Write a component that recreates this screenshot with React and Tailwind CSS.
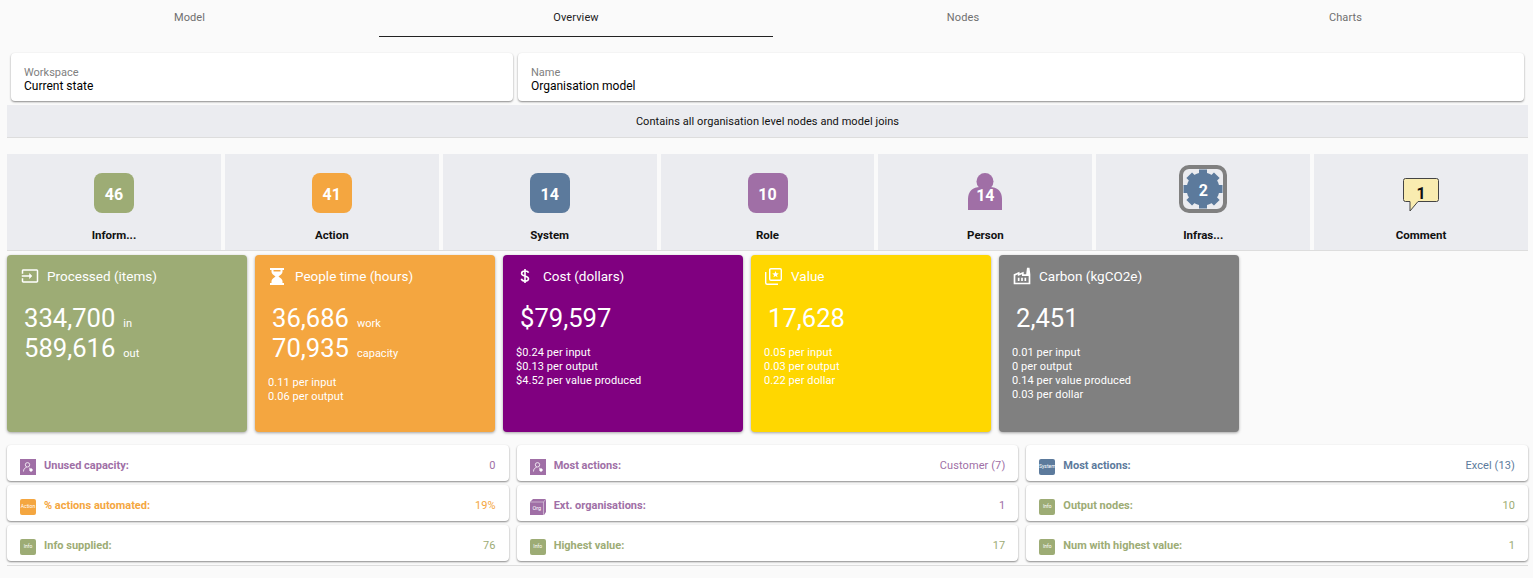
import React from 'react';
import { MdOutlineInput, MdOutlineFactory } from 'react-icons/md';

const tabs = ['Model', 'Overview', 'Nodes', 'Charts'];

const PersonCog = () => (
  <svg viewBox="0 0 16 16" className="w-full h-full" fill="none" stroke="white" strokeWidth="0.8">
    <circle cx="7.500" cy="5.800" r="2.200" />
    <path d="M3.500 12.500c0-2.500 1.500-3.800 3-4M9 9l1.200.6" />
    <circle cx="11" cy="11" r="1.300" fill="white" />
  </svg>
);

const OrgBox = () => (
  <svg viewBox="0 0 16 16" className="w-full h-full">
    <path d="M0 3 3 0h13v13l-2 3H0z" fill="#a06fa6" />
    <path d="M0 3h13.500V16M13.500 3 16 0" fill="none" stroke="#e8dcea" strokeWidth="0.6" />
    <text x="6.800" y="11" textAnchor="middle" fontSize="5.500" fill="white" fontFamily="Roboto">Org</text>
  </svg>
);

const Hourglass = () => (
  <svg viewBox="0 0 14 17" className="w-[14px] h-[17px]" fill="white" fillRule="evenodd">
    <path d="M0 0h14v2h-1.500v2c0 2-2.500 3-4 4.500 1.500 1.500 4 2.500 4 4.500v2H14v2H0v-2h1.500v-2c0-2 2.500-3 4-4.500C4 7 1.500 6 1.500 4V2H0zM3.500 2v1.500h7V2z" />
  </svg>
);

const Dollar = () => (
  <svg viewBox="0 0 10 14" className="w-[10px] h-[14px]" fill="none" stroke="white" strokeWidth="1.600">
    <path d="M8.500 3.800C8 2.300 6.500 2 5 2 3 2 1.600 3 1.600 4.400 1.600 5.800 3 6.400 5 7c2 .6 3.500 1.200 3.500 2.700 0 1.500-1.500 2.300-3.500 2.300-1.800 0-3.200-.7-3.700-2.300M5 0v14" />
  </svg>
);

const ValueIcon = () => (
  <svg viewBox="0 0 17 17" className="w-[17px] h-[17px]" fill="none" stroke="white" strokeWidth="1.400">
    <rect x="4.700" y="0.700" width="11.600" height="11.600" rx="1.200" />
    <path d="M0.700 4v10.800a1.500 1.500 0 0 0 1.500 1.500H13" />
    <path d="M10.500 3 11.400 5.300 13.800 5.400 11.900 7 12.600 9.300 10.500 8 8.400 9.300 9.100 7 7.200 5.400 9.600 5.300z" fill="white" stroke="none" />
  </svg>
);

const Tile = ({ label, children }) => (
  <div className="flex-1 h-[96px] bg-[#ebecf0] flex flex-col items-center">
    <div className="h-[71px] flex items-center justify-center pt-[7px]">{children}</div>
    <div className="text-[11.5px] font-bold text-[#111] mt-[2px]">{label}</div>
  </div>
);

const Badge = ({ color, children }) => (
  <div className={`w-10 h-10 rounded-lg flex items-center justify-center pt-[4px] text-white font-bold text-base ${color}`}>{children}</div>
);

const Kpi = ({ color, icon, title, children }) => (
  <div className={`w-[240px] h-[177px] rounded shadow-[0_1px_3px_rgba(0,0,0,0.35)] text-white pl-[14px] ${color}`}>
    <div className="h-[42px] flex items-center">
      <span className="w-[26px] flex-none flex items-center">{icon}</span>
      <span className="text-[13.5px]">{title}</span>
    </div>
    {children}
  </div>
);

const Big = ({ value, unit }) => (
  <div className="h-[30px] flex items-baseline">
    <span className="text-[25.6px] leading-[30px]">{value}</span>
    {unit && <span className="text-[11px] ml-2">{unit}</span>}
  </div>
);

const Lines = ({ items }) => (
  <div className="mt-[13px] -ml-[1px] text-[11px] leading-[14px] tracking-[0.08px]">
    {items.map((t) => <div key={t}>{t}</div>)}
  </div>
);

const SmallIcon = ({ color, children, square }) => (
  <div className={`w-4 h-4 flex-none flex items-center justify-center overflow-hidden text-white text-[5px] ${square ? '' : 'rounded-[2px]'} ${color}`}>{children}</div>
);

const Stat = ({ icon, label, value, text }) => (
  <div className="h-9 bg-white rounded shadow-[0_1px_2px_rgba(0,0,0,0.45)] flex items-center pl-[13px] pr-[13px] pt-[7px]">
    {icon}
    <span className={`ml-2 text-[11px] font-bold ${text}`}>{label}</span>
    <span className={`ml-auto text-[11px] tracking-[0.1px] ${text}`}>{value}</span>
  </div>
);

const purple = 'bg-[#a06fa6]';
const textPurple = 'text-[#a06fa6]';
const textOrange = 'text-[#f4a640]';
const textGreen = 'text-[#9dac75]';
const textBlue = 'text-[#5c7a9c]';
const info = <SmallIcon color="bg-[#9dac75]">Info</SmallIcon>;

export default function App() {
  return (
    <div className="min-h-[578px] bg-[#fafafa] overflow-hidden font-['Roboto',sans-serif] text-[#111]">
      {/* tabs */}
      <div className="grid grid-cols-[379px_394px_380px_385px] h-[37px]">
        {tabs.map((t) => (
          <div
            key={t}
            className={`flex justify-center pt-[11px] text-[11px] leading-[14px] tracking-[0.1px] ${t === 'Overview' ? 'border-b border-[#222] text-[#222]' : 'text-[#6f6f6f]'}`}
          >
            {t}
          </div>
        ))}
      </div>

      <div className="grid grid-cols-[502px_1fr] gap-[5px] mt-[16px] ml-[11px] mr-[9px]">
        <div className="h-12 bg-white rounded shadow-[0_1px_2px_rgba(0,0,0,0.45)] px-[13px] pt-[13px] text-xs">
          <div className="text-[11px] leading-[13px] text-[#808080]">Workspace</div>
          <div className="leading-[14px] text-[#000]">Current state</div>
        </div>
        <div className="h-12 bg-white rounded shadow-[0_1px_2px_rgba(0,0,0,0.45)] px-[13px] pt-[13px] text-xs">
          <div className="text-[11px] leading-[13px] text-[#808080]">Name</div>
          <div className="leading-[14px] text-[#000]">Organisation model</div>
        </div>
      </div>

      <div className="mt-1 ml-[7px] mr-[5px] h-[33px] pt-[2px] bg-[#ebecf0] border-b border-[#ddd] flex items-center justify-center text-[11px] tracking-[0.07px]">
        Contains all organisation level nodes and model joins
      </div>

      {/* node type tiles */}
      <div className="mt-4 ml-[7px] mr-[5px] border-b border-[#ddd] flex gap-1">
        <Tile label="Inform..."><Badge color="bg-[#9dac75]">46</Badge></Tile>
        <Tile label="Action"><Badge color="bg-[#f4a640]">41</Badge></Tile>
        <Tile label="System"><Badge color="bg-[#5c7a9c]">14</Badge></Tile>
        <Tile label="Role"><Badge color={purple}>10</Badge></Tile>
        <Tile label="Person">
          <div className="relative w-[36px] h-10">
            <svg viewBox="0 0 36 40" className="w-full h-full">
              <circle cx="18" cy="8.500" r="8.500" fill="#a06fa6" />
              <path d="M1 37V26C1 18 6 14 13 14h10c7 0 12 4 12 12v11z" fill="#a06fa6" />
            </svg>
            <span className="absolute inset-x-0 top-[11px] text-center text-white font-bold text-base">14</span>
          </div>
        </Tile>
        <Tile label="Infras...">
          <div className="relative w-[48px] h-[48px] -mt-[8px]">
            <svg viewBox="0 0 48 48" className="w-full h-full">
              <rect x="2" y="2" width="44" height="44" rx="8" fill="#ebecf0" stroke="#808080" strokeWidth="4" />
              <g fill="#5c7a9c">
                <circle cx="24" cy="24" r="16.500" />
                <rect x="20" y="4.500" width="8" height="39" />
                <rect x="20" y="4.500" width="8" height="39" transform="rotate(45 24 24)" />
                <rect x="20" y="4.500" width="8" height="39" transform="rotate(90 24 24)" />
                <rect x="20" y="4.500" width="8" height="39" transform="rotate(135 24 24)" />
              </g>
            </svg>
            <span className="absolute inset-x-0 top-[14px] text-center text-white font-bold text-base">2</span>
          </div>
        </Tile>
        <Tile label="Comment">
          <div className="relative w-[38px] h-10">
            <svg viewBox="0 0 38 40" className="w-full h-full">
              <path d="M3.500 5.500h31a2 2 0 0 1 2 2v19a2 2 0 0 1-2 2H16L8 38V28.500H3.500a2 2 0 0 1-2-2v-19a2 2 0 0 1 2-2z" fill="#f9ecb0" stroke="#444" strokeWidth="1" />
            </svg>
            <span className="absolute inset-x-0 top-[9px] text-center text-[#111] font-bold text-base">1</span>
          </div>
        </Tile>
      </div>

      {/* kpi cards */}
      <div className="flex gap-2 mt-1 ml-[7px]">
        <Kpi color="bg-[#9dac75]" title="Processed (items)" icon={<MdOutlineInput size={18} />}>
          <div className="mt-[6px] pl-[3px]">
            <Big value="334,700" unit="in" />
            <Big value="589,616" unit="out" />
          </div>
        </Kpi>
        <Kpi color="bg-[#f4a640]" title="People time (hours)" icon={<span className="ml-[1px]"><Hourglass /></span>}>
          <div className="mt-[6px] pl-[3px]">
            <Big value="36,686" unit="work" />
            <Big value="70,935" unit="capacity" />
          </div>
          <Lines items={['0.11 per input', '0.06 per output']} />
        </Kpi>
        <Kpi color="bg-[#800080]" title="Cost (dollars)" icon={<span className="ml-[3px]"><Dollar /></span>}>
          <div className="mt-[6px] pl-[3px]"><Big value="$79,597" /></div>
          <Lines items={['$0.24 per input', '$0.13 per output', '$4.52 per value produced']} />
        </Kpi>
        <Kpi color="bg-[#ffd700]" title="Value" icon={<ValueIcon />}>
          <div className="mt-[6px] pl-[3px]"><Big value="17,628" /></div>
          <Lines items={['0.05 per input', '0.03 per output', '0.22 per dollar']} />
        </Kpi>
        <Kpi color="bg-[#808080]" title="Carbon (kgCO2e)" icon={<MdOutlineFactory size={20} className="-ml-[1px]" />}>
          <div className="mt-[6px] pl-[3px]"><Big value="2,451" /></div>
          <Lines items={['0.01 per input', '0 per output', '0.14 per value produced', '0.03 per dollar']} />
        </Kpi>
      </div>

      {/* stats */}
      <div className="mt-[13px] ml-[7px] mr-[5px] grid grid-cols-3 gap-x-2 gap-y-1">
        <Stat text={textPurple} label="Unused capacity:" value="0" icon={<SmallIcon square color={purple}><PersonCog /></SmallIcon>} />
        <Stat text={textPurple} label="Most actions:" value="Customer (7)" icon={<SmallIcon square color={purple}><PersonCog /></SmallIcon>} />
        <Stat text={textBlue} label="Most actions:" value="Excel (13)" icon={<SmallIcon color="bg-[#5c7a9c]">System</SmallIcon>} />
        <Stat text={textOrange} label="% actions automated:" value="19%" icon={<SmallIcon color="bg-[#f4a640]">Action</SmallIcon>} />
        <Stat text={textPurple} label="Ext. organisations:" value="1" icon={<div className="w-4 h-4 flex-none"><OrgBox /></div>} />
        <Stat text={textGreen} label="Output nodes:" value="10" icon={info} />
        <Stat text={textGreen} label="Info supplied:" value="76" icon={info} />
        <Stat text={textGreen} label="Highest value:" value="17" icon={info} />
        <Stat text={textGreen} label="Num with highest value:" value="1" icon={info} />
      </div>
      <div className="mt-1 ml-[7px] mr-[5px] border-b border-[#ddd]" />
    </div>
  );
}
